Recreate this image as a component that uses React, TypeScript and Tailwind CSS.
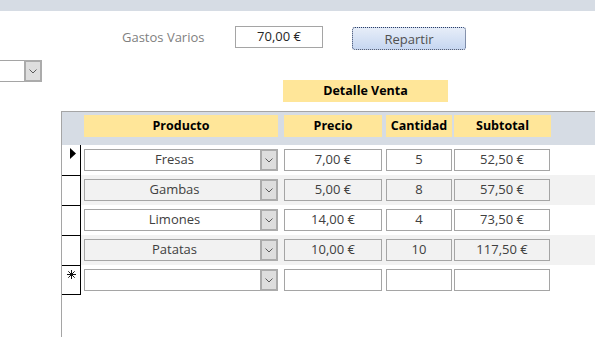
import React from "react";

const rows = [
  { producto: "Fresas", precio: "7,00 €", cantidad: "5", subtotal: "52,50 €" },
  { producto: "Gambas", precio: "5,00 €", cantidad: "8", subtotal: "57,50 €" },
  { producto: "Limones", precio: "14,00 €", cantidad: "4", subtotal: "73,50 €" },
  { producto: "Patatas", precio: "10,00 €", cantidad: "10", subtotal: "117,50 €" },
];

function Chevron() {
  return (
    <svg width="8" height="5" viewBox="0 0 8 5" className="block">
      <path d="M0.5 0.5 L4 4 L7.5 0.5" fill="none" stroke="#5a5a5a" strokeWidth="1" />
    </svg>
  );
}

function DropButton() {
  return (
    <div className="-my-px -mr-px flex h-[22px] w-[18px] shrink-0 items-center justify-center border-2 border-[#ababab] bg-[#dedede]">
      <Chevron />
    </div>
  );
}

function Selector({ kind, first, last }: { kind: "current" | "none" | "new"; first?: boolean; last?: boolean }) {
  return (
    <div
      className={
        "flex h-[30px] w-[19px] shrink-0 border-r border-black bg-white " +
        (first ? "" : "border-t ") +
        (last ? "border-b " : "")
      }
    >
      {kind === "current" && (
        <svg width="7" height="11" viewBox="0 0 7 11" className="ml-[8px] mt-[3px]">
          <polygon points="0,0 6,5.5 0,11" fill="#000" />
        </svg>
      )}
      {kind === "new" && (
        <svg width="9" height="9" viewBox="0 0 9 9" className="ml-[5px] mt-[4px]">
          <g stroke="#111" strokeWidth="1">
            <line x1="4.5" y1="0" x2="4.5" y2="9" />
            <line x1="0" y1="4.5" x2="9" y2="4.5" />
            <line x1="1.3" y1="1.3" x2="7.7" y2="7.7" />
            <line x1="7.7" y1="1.3" x2="1.3" y2="7.7" />
          </g>
        </svg>
      )}
    </div>
  );
}

function Row({ r, alt, idx }: { r?: (typeof rows)[number]; alt: boolean; idx: number }) {
  const box = "flex h-[22px] items-center justify-center border border-[#a5a5a5] " + (alt ? "bg-[#f2f2f2]" : "bg-white");
  return (
    <div className="flex h-[30px]">
      <Selector kind={idx === 0 ? "current" : r ? "none" : "new"} first={idx === 0} last={!r} />
      <div className={"flex flex-1 pt-[4px] pl-[3px] " + (alt ? "bg-[#f2f2f2]" : "bg-white")}>
        <div className={box + " w-[194px] !justify-start"}>
          <span className="flex-1 pl-[4px] text-center">{r?.producto}</span>
          <DropButton />
        </div>
        <div className={box + " ml-[6px] w-[98px]"}>{r?.precio}</div>
        <div className={box + " ml-[4px] w-[66px]"}>{r?.cantidad}</div>
        <div className={box + " ml-[2px] w-[96px]"}>{r?.subtotal}</div>
      </div>
    </div>
  );
}

export default function App() {
  return (
    <div className="h-[337px] w-[595px] overflow-hidden bg-white font-['Open_Sans',sans-serif] text-[13px] text-[#404040]">
      <div className="h-[11px] bg-[#d6dce4]" />

      {/* Gastos Varios / Repartir */}
      <div className="mt-[15px] flex items-start">
        <div className="ml-[122px] w-[113px] text-[13px] leading-[22px] text-[#7f7f7f]">Gastos Varios</div>
        <div className="flex h-[22px] w-[88px] items-center justify-center border border-[#a5a5a5] text-[#262626]">70,00 €</div>
        <button className="ml-[29px] mt-px h-[23px] w-[114px] rounded-[3px] border border-dotted border-[#2f3f63] bg-gradient-to-b from-[#e6edf8] to-[#c7d7f1] text-[13px] leading-[20px] text-[#505050]">
          Repartir
        </button>
      </div>

      {/* left combo + title */}
      <div className="mt-[10px] flex items-start">
        <div className="flex h-[22px] w-[42px] border-y border-r border-[#a5a5a5]">
          <div className="flex-1" />
          <DropButton />
        </div>
        <div className="ml-[241px] mt-[20px] flex h-[22px] w-[165px] items-center justify-center bg-[#ffe699] text-[12.5px] font-bold text-black">
          Detalle Venta
        </div>
      </div>

      {/* subform */}
      <div className="ml-[61px] mt-[9px] h-[240px] border-l border-t border-[#a5a5a5]">
        <div className="flex h-[33px] bg-[#d6dce4] pl-[22px] pt-[3px] text-[12.5px] font-bold text-black">
          <div className="flex h-[22px] w-[194px] items-center justify-center bg-[#ffe699]">Producto</div>
          <div className="ml-[6px] flex h-[22px] w-[98px] items-center justify-center bg-[#ffe699]">Precio</div>
          <div className="ml-[4px] flex h-[22px] w-[66px] items-center justify-center bg-[#ffe699]">Cantidad</div>
          <div className="ml-[2px] flex h-[22px] w-[97px] items-center justify-center bg-[#ffe699]">Subtotal</div>
        </div>
        {rows.map((r, i) => (
          <Row key={i} r={r} alt={i % 2 === 1} idx={i} />
        ))}
        <Row alt={false} idx={4} />
      </div>
    </div>
  );
}
